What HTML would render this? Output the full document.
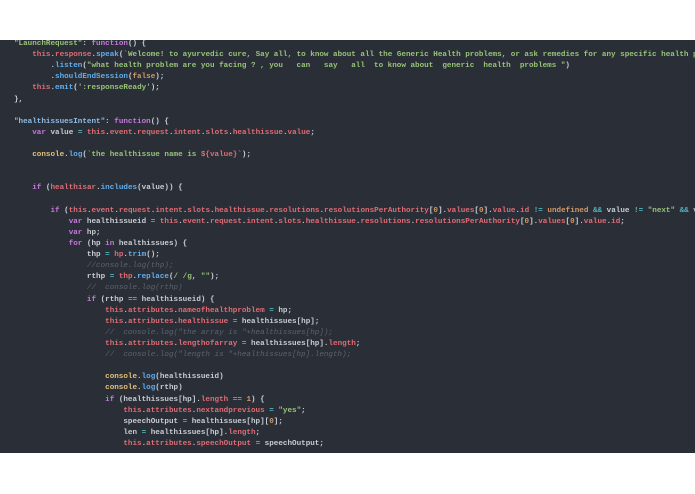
<!DOCTYPE html>
<html><head><meta charset="utf-8"><style>
html,body{margin:0;padding:0;background:#fff;width:695px;height:494px;overflow:hidden}
#ed{position:absolute;left:0;top:40px;width:695px;height:413px;background:#2a2e36;overflow:hidden}
pre{position:absolute;left:14px;top:-1px;margin:0;font-family:"Liberation Mono",monospace;font-size:7.6px;line-height:11.11px;color:#c8ccd4;font-weight:bold;white-space:pre}
.k{color:#c678dd}.t{color:#e06c75}.m{color:#61afef}.s{color:#98c379}.c{color:#e5c07b}.g{color:#5c6370;font-style:italic;font-weight:normal}.n{color:#d19a66}.o{color:#56b6c2}.p{color:#8fbce6}
</style></head><body><div id="ed"><pre><span class="s">"LaunchRequest"</span>: <span class="k">function</span>() {
    <span class="t">this</span>.<span class="t">response</span>.<span class="m">speak</span>(<span class="s">`Welcome! to ayurvedic cure, Say all, to know about all the Generic Health problems, or ask remedies for any specific health problem`</span>)
        .<span class="m">listen</span>(<span class="s">"what health problem are you facing ? , you   can   say   all  to know about  generic  health  problems "</span>)
        .<span class="m">shouldEndSession</span>(<span class="n">false</span>);
    <span class="t">this</span>.<span class="m">emit</span>(<span class="s">':responseReady'</span>);
},

<span class="p">"healthissuesIntent"</span>: <span class="k">function</span>() {
    <span class="k">var</span> value <span class="o">=</span> <span class="t">this</span>.<span class="t">event</span>.<span class="t">request</span>.<span class="t">intent</span>.<span class="t">slots</span>.<span class="t">healthissue</span>.<span class="t">value</span>;

    <span class="c">console</span>.<span class="m">log</span>(<span class="s">`the healthissue name is </span><span class="t">${value}</span><span class="s">`</span>);


    <span class="k">if</span> (<span class="t">healthisar</span>.<span class="m">includes</span>(value)) {

        <span class="k">if</span> (<span class="t">this</span>.<span class="t">event</span>.<span class="t">request</span>.<span class="t">intent</span>.<span class="t">slots</span>.<span class="t">healthissue</span>.<span class="t">resolutions</span>.<span class="t">resolutionsPerAuthority</span>[<span class="n">0</span>].<span class="t">values</span>[<span class="n">0</span>].<span class="t">value</span>.<span class="t">id</span> <span class="o">!=</span> <span class="n">undefined</span> <span class="o">&amp;&amp;</span> value <span class="o">!=</span> <span class="s">"next"</span> <span class="o">&amp;&amp;</span> value
            <span class="k">var</span> healthissueid <span class="o">=</span> <span class="t">this</span>.<span class="t">event</span>.<span class="t">request</span>.<span class="t">intent</span>.<span class="t">slots</span>.<span class="t">healthissue</span>.<span class="t">resolutions</span>.<span class="t">resolutionsPerAuthority</span>[<span class="n">0</span>].<span class="t">values</span>[<span class="n">0</span>].<span class="t">value</span>.<span class="t">id</span>;
            <span class="k">var</span> hp;
            <span class="k">for</span> (hp <span class="k">in</span> healthissues) {
                thp <span class="o">=</span> <span class="t">hp</span>.<span class="m">trim</span>();
                <span class="g">//console.log(thp);</span>
                rthp <span class="o">=</span> <span class="t">thp</span>.<span class="m">replace</span>(<span class="s">/ /g</span>, <span class="s">""</span>);
                <span class="g">//  console.log(rthp)</span>
                <span class="k">if</span> (rthp <span class="o">==</span> healthissueid) {
                    <span class="t">this</span>.<span class="t">attributes</span>.<span class="t">nameofhealthproblem</span> <span class="o">=</span> hp;
                    <span class="t">this</span>.<span class="t">attributes</span>.<span class="t">healthissue</span> <span class="o">=</span> healthissues[hp];
                    <span class="g">//  console.log("the array is "+healthissues[hp]);</span>
                    <span class="t">this</span>.<span class="t">attributes</span>.<span class="t">lengthofarray</span> <span class="o">=</span> healthissues[hp].<span class="t">length</span>;
                    <span class="g">//  console.log("length is "+healthissues[hp].length);</span>

                    <span class="c">console</span>.<span class="m">log</span>(healthissueid)
                    <span class="c">console</span>.<span class="m">log</span>(rthp)
                    <span class="k">if</span> (healthissues[hp].<span class="t">length</span> <span class="o">==</span> <span class="n">1</span>) {
                        <span class="t">this</span>.<span class="t">attributes</span>.<span class="t">nextandprevious</span> <span class="o">=</span> <span class="s">"yes"</span>;
                        speechOutput <span class="o">=</span> healthissues[hp][<span class="n">0</span>];
                        len <span class="o">=</span> healthissues[hp].<span class="t">length</span>;
                        <span class="t">this</span>.<span class="t">attributes</span>.<span class="t">speechOutput</span> <span class="o">=</span> speechOutput;
</pre></div></body></html>
